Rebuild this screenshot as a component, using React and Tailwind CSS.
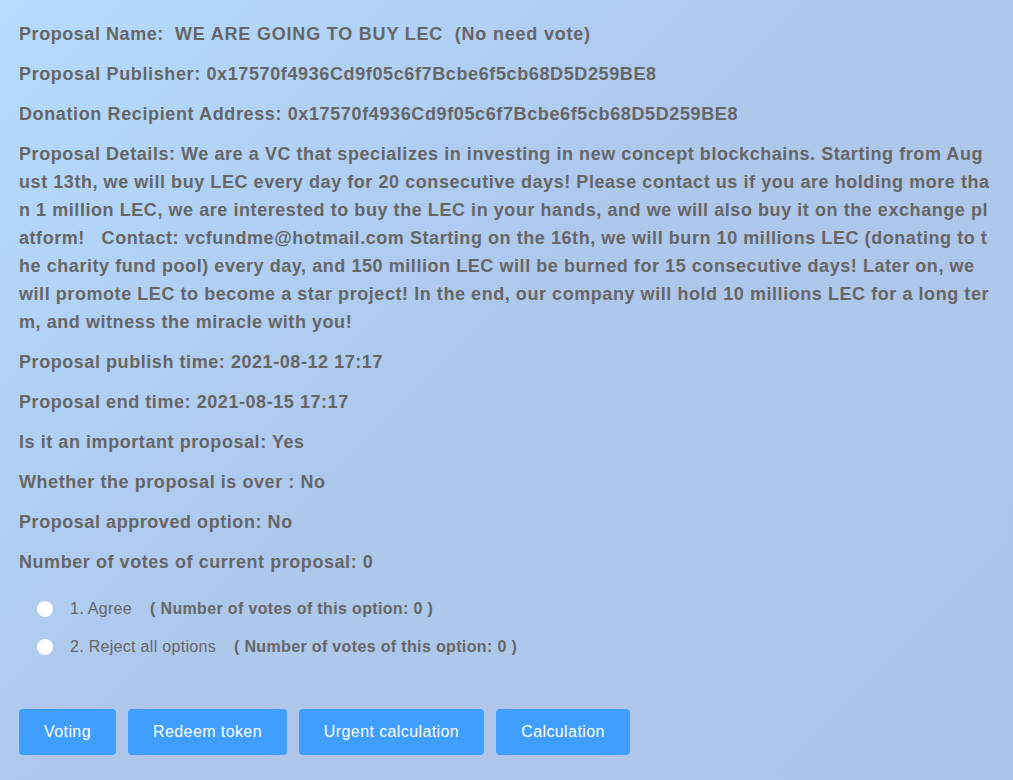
import { useState } from "react";

const rows = [
  ["Proposal publish time:", "2021-08-12 17:17"],
  ["Proposal end time:", "2021-08-15 17:17"],
  ["Is it an important proposal:", "Yes"],
  ["Whether the proposal is over :", "No"],
  ["Proposal approved option:", "No"],
  ["Number of votes of current proposal:", "0"],
];

const options = [
  { id: 1, label: "1. Agree", votes: 0 },
  { id: 2, label: "2. Reject all options", votes: 0 },
];

const buttons = [
  { label: "Voting", w: "w-[97px]" },
  { label: "Redeem token", w: "w-[159px]" },
  { label: "Urgent calculation", w: "w-[185px]" },
  { label: "Calculation", w: "w-[134px]" },
];

// the details text wraps mid-word, same breaks as the live page
const detailLines = [
  "Proposal Details: We are a VC that specializes in investing in new concept blockchains. Starting from Aug",
  "ust 13th, we will buy LEC every day for 20 consecutive days! Please contact us if you are holding more tha",
  "n 1 million LEC, we are interested to buy the LEC in your hands, and we will also buy it on the exchange pl",
  "atform!   Contact: vcfundme@hotmail.com Starting on the 16th, we will burn 10 millions LEC (donating to t",
  "he charity fund pool) every day, and 150 million LEC will be burned for 15 consecutive days! Later on, we",
  "will promote LEC to become a star project! In the end, our company will hold 10 millions LEC for a long ter",
  "m, and witness the miracle with you!",
];

export default function App() {
  const [picked, setPicked] = useState(null);

  return (
    <div className="min-h-[780px] w-full bg-[linear-gradient(135deg,#b4dcfe_0%,#aec8ec_45%,#adc5e9_100%)] font-['Liberation_Sans',Arial,sans-serif]">
      <div className="pl-[19px] pr-[20px] pt-[20px] pb-[24px]">
        <div className="text-[18px] font-bold leading-[28px] tracking-[0.56px] text-[#666666] flex flex-col gap-[12px]">
          <p className="whitespace-pre">
            Proposal Name:  <span className="tracking-[0.8px]">WE ARE GOING TO BUY LEC  (No need vote)</span>
          </p>
          <p className="tracking-[0.62px]">Proposal Publisher: 0x17570f4936Cd9f05c6f7Bcbe6f5cb68D5D259BE8</p>
          <p className="tracking-[0.62px]">Donation Recipient Address: 0x17570f4936Cd9f05c6f7Bcbe6f5cb68D5D259BE8</p>
          <p className="whitespace-pre">
            {detailLines.map((l, i) => (
              <span key={i} className="block">
                {l}
              </span>
            ))}
          </p>
          {rows.map(([k, v]) => (
            <p key={k}>
              {k} {v}
            </p>
          ))}
        </div>

        {/* options */}
        <div className="mt-[14px] pl-[18px] flex flex-col">
          {options.map((o) => (
            <label key={o.id} className="h-[38px] flex items-center cursor-pointer">
              <span
                onClick={() => setPicked(o.id)}
                className="w-[16px] h-[16px] rounded-full bg-white flex items-center justify-center shrink-0"
              >
                {picked === o.id && <span className="w-[6px] h-[6px] rounded-full bg-[#409eff]" />}
              </span>
              <span className="ml-[17px] text-[16px] tracking-[0.3px] text-[#666666]">{o.label}</span>
              <span className="ml-[18px] text-[16px] tracking-[0.35px] font-bold text-[#666666]">
                ( Number of votes of this option: {o.votes} )
              </span>
            </label>
          ))}
        </div>

        <div className="mt-[43px] flex gap-[12px]">
          {buttons.map((b) => (
            <button
              key={b.label}
              className={`${b.w} h-[46px] rounded-[4px] bg-[#409eff] text-white text-[16px] tracking-[0.4px] hover:bg-[#66b1ff]`}
            >
              {b.label}
            </button>
          ))}
        </div>
      </div>
    </div>
  );
}
